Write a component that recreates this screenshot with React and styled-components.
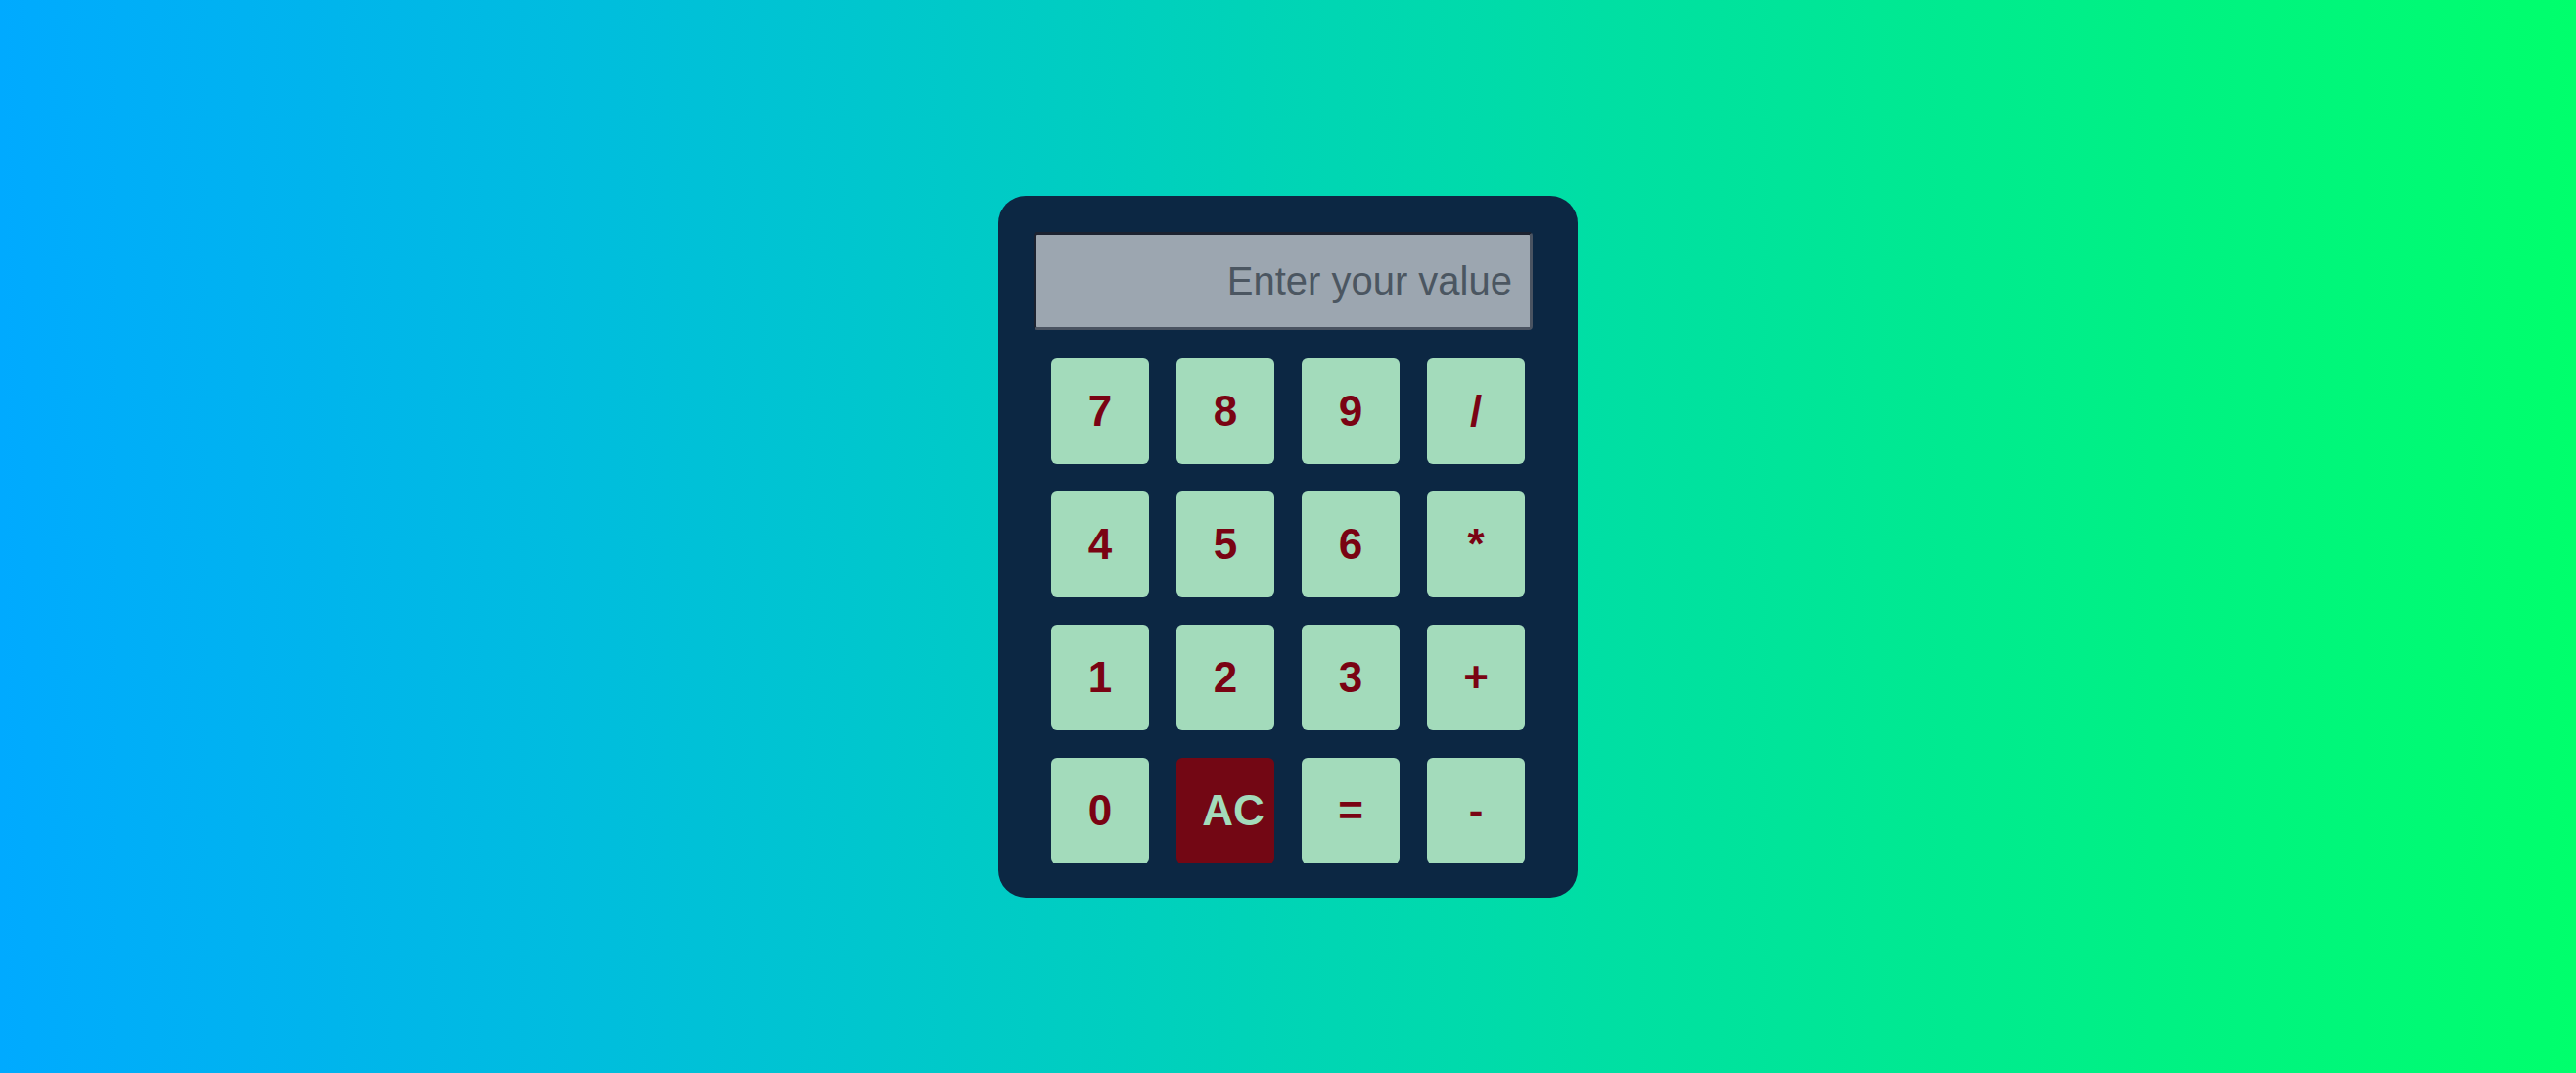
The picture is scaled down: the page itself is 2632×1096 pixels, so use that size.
import React, { useState } from "react";
import styled, { createGlobalStyle } from "styled-components";

const GlobalStyle = createGlobalStyle`
  html, body {
    margin: 0;
    padding: 0;
  }
  body {
    font-family: "Liberation Sans", Arial, sans-serif;
  }
`;

const Page = styled.div`
  min-height: 100vh;
  box-sizing: border-box;
  display: flex;
  justify-content: center;
  align-items: flex-start;
  padding-top: 200px;
  background: linear-gradient(to right, #00aaff, #00ff6c);
`;

const Calculator = styled.div`
  width: 592px;
  box-sizing: border-box;
  padding: 37px 46px 35px 36px;
  background-color: #0c2743;
  border-radius: 28px;
  display: flex;
  flex-direction: column;
`;

const Display = styled.input`
  width: 510px;
  height: 100px;
  box-sizing: border-box;
  padding: 0 18px 0 16px;
  border-style: solid;
  border-width: 3px;
  border-color: #1c2230 #4a5361 #4a5361 #1c2230;
  border-radius: 4px;
  background-color: #9ca6b0;
  color: #3d4754;
  font-family: "Liberation Sans", Arial, sans-serif;
  font-size: 40px;
  text-align: right;
  outline: none;

  &::placeholder {
    color: #4b5661;
  }
`;

const Keypad = styled.div`
  display: grid;
  grid-template-columns: repeat(4, 100px);
  grid-auto-rows: 108px;
  gap: 28px;
  margin-top: 29px;
  padding-left: 18px;
`;

const Key = styled.button`
  border: none;
  border-radius: 6px;
  padding: 0 0 0 ${(p) => (p.$clear ? "16px" : "0")};
  background-color: ${(p) => (p.$clear ? "#730714" : "#a3dbbb")};
  color: ${(p) => (p.$clear ? "#a3dbbb" : "#7a0313")};
  font-family: "Liberation Sans", Arial, sans-serif;
  font-weight: bold;
  font-size: 44px;
  cursor: pointer;
  white-space: nowrap;
`;

const keys = ["7", "8", "9", "/", "4", "5", "6", "*", "1", "2", "3", "+", "0", "AC", "=", "-"];

const App = () => {
  const [value, setValue] = useState("");

  const handleKey = (key) => {
    if (key === "AC") {
      setValue("");
    } else if (key === "=") {
      try {
        // eslint-disable-next-line no-new-func
        setValue(String(Function(`return (${value})`)()));
      } catch (e) {
        setValue("Error");
      }
    } else {
      setValue(value + key);
    }
  };

  return (
    <Page>
      <GlobalStyle />
      <Calculator>
        <Display
          type="text"
          placeholder="Enter your value"
          value={value}
          onChange={(e) => setValue(e.target.value)}
        />
        <Keypad>
          {keys.map((key) => (
            <Key key={key} $clear={key === "AC"} onClick={() => handleKey(key)}>
              {key}
            </Key>
          ))}
        </Keypad>
      </Calculator>
    </Page>
  );
};

export default App;
